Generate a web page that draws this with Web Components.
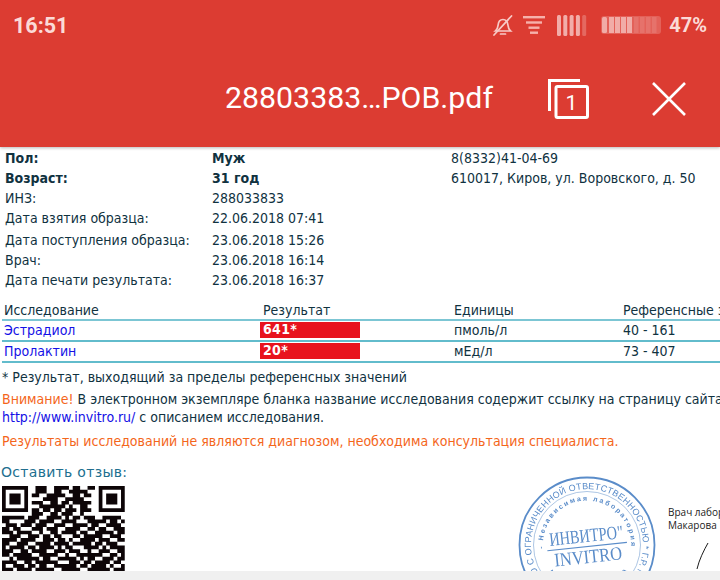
<!DOCTYPE html>
<html lang="ru">
<head>
<meta charset="utf-8">
<title>PDF</title>
<style>
    html, body { margin: 0; padding: 0; width: 720px; height: 580px; overflow: hidden; background: #fff; }
    body { display: flex; flex-direction: column; position: relative; font-family: "DejaVu Sans", sans-serif; }
    .b { font-weight: 700; }
    .wide { margin-top: 2px; }
    a { color: #1410e6; text-decoration: none; }
    .warn { color: #f4661b; }
</style>
</head>
<body>
<app-bar></app-bar>
<report-page>
    <patient-info>
        <info-row class="b"><span slot="label">Пол:</span><span slot="value">Муж</span><span slot="extra" style="font-weight:400">8(8332)41-04-69</span></info-row>
        <info-row class="b"><span slot="label">Возраст:</span><span slot="value">31 год</span><span slot="extra" style="font-weight:400">610017, Киров, ул. Воровского, д. 50</span></info-row>
        <info-row><span slot="label">ИНЗ:</span><span slot="value">288033833</span></info-row>
        <info-row><span slot="label">Дата взятия образца:</span><span slot="value">22.06.2018 07:41</span></info-row>
        <info-row class="wide"><span slot="label">Дата поступления образца:</span><span slot="value">23.06.2018 15:26</span></info-row>
        <info-row><span slot="label">Врач:</span><span slot="value">23.06.2018 16:14</span></info-row>
        <info-row><span slot="label">Дата печати результата:</span><span slot="value">23.06.2018 16:37</span></info-row>
    </patient-info>
    <results-table>
        <result-row head><span slot="name">Исследование</span><span slot="result">Результат</span><span slot="unit">Единицы</span><span slot="ref">Референсные значения</span></result-row>
        <result-row flagged><a slot="name" href="#">Эстрадиол</a><span slot="result">641*</span><span slot="unit">пмоль/л</span><span slot="ref">40 - 161</span></result-row>
        <result-row flagged><a slot="name" href="#">Пролактин</a><span slot="result">20*</span><span slot="unit">мЕд/л</span><span slot="ref">73 - 407</span></result-row>
    </results-table>
    <report-notes>
        <p slot="legend">* Результат, выходящий за пределы референсных значений</p>
        <p slot="attention"><span class="warn">Внимание!</span> В электронном экземпляре бланка название исследования содержит ссылку на страницу сайта<br><a href="#">http://www.invitro.ru/</a> с описанием исследования.</p>
        <p slot="disclaimer" class="warn">Результаты исследований не являются диагнозом, необходима консультация специалиста.</p>
    </report-notes>
    <report-footer></report-footer>
</report-page>
<bottom-strip></bottom-strip>

<script>
class AppBar extends HTMLElement {
    constructor() {
        super();
        this.attachShadow({ mode: 'open' });
        this.shadowRoot.innerHTML = `
            <style>
                :host { display: block; flex: none; height: 147px; background: #dc3c32; box-shadow: 0 1px 3px rgba(0,0,0,.28); position: relative; z-index: 2; font-family: Roboto, sans-serif; color: #fff; }
                .status { display: flex; align-items: center; height: 50px; padding: 0 13px 0 13px; color: #fbdad7; font-weight: 700; font-size: 21.5px; }
                .time { flex: 1; }
                .icons { display: flex; align-items: center; }
                .pct { margin-left: 8px; font-size: 20px; }
                .bar { display: flex; align-items: center; height: 98px; }
                .title { margin-left: 225px; width: 323px; font-size: 30.3px; padding-bottom: 3px; box-sizing: border-box; white-space: nowrap; }
                .count { display: block; }
                .close { display: block; margin-left: 63px; }
                svg { display: block; flex: none; overflow: visible; }
            </style>
            <div class="status">
                <span class="time">16:51</span>
                <div class="icons">
                    <svg width="20" height="21" viewBox="0 0 20 21" fill="none" stroke="#fbdad7" stroke-width="1.700" stroke-linecap="round" opacity=".9">
                        <path d="M2.500 16c1.700-1.400 2.300-3 2.600-5.900.3-3.300 2.100-5.600 4.900-5.600s4.500 2.200 4.900 5.400c.3 3 1.100 4.800 2.600 6.100z"/>
                        <path d="M7.500 19h5"/><path d="M1 20 18.500 1"/>
                    </svg>
                    <svg style="margin-left:10px" width="22" height="18" viewBox="0 0 22 18" fill="#f6b1ab">
                        <rect x="0" y="0" width="22" height="2.400"/><rect x="3" y="5.300" width="16" height="2.400"/><rect x="5.500" y="10.500" width="11" height="2.400"/><rect x="7" y="15.500" width="8" height="2.400"/>
                    </svg>
                    <svg style="margin-left:12px" width="30" height="21" viewBox="0 0 30 21" fill="#fbdad7">
                        <rect x="0" y="0" width="4" height="21" rx="1.500" opacity=".72"/><rect x="6.300" y="0" width="4" height="21" rx="1.500" opacity=".72"/><rect x="12.600" y="0" width="4" height="21" rx="1.500" opacity=".72"/><rect x="18.900" y="0" width="4" height="21" rx="1.500" opacity=".72"/><rect x="25.200" y="0" width="4" height="21" rx="1.500" opacity=".28"/>
                    </svg>
                    <svg style="margin-left:14px" width="60" height="18" viewBox="0 0 60 18">
                        <rect width="60" height="18" rx="3" fill="#fbdad7" opacity=".24"/>
                        <g fill="#fbdad7" opacity=".62"><rect x="1" y="1" width="5" height="16" rx="1.500"/><rect x="8" y="1" width="5" height="16"/><rect x="14" y="1" width="5" height="16"/><rect x="20" y="1" width="5" height="16"/><rect x="26" y="1" width="5" height="16"/></g>
                        <g fill="#fbdad7" opacity=".14"><rect x="33" y="1" width="4.500" height="16"/><rect x="39" y="1" width="4.500" height="16"/><rect x="45" y="1" width="4.500" height="16"/><rect x="51" y="1" width="4.500" height="16"/></g>
                    </svg>
                    <span class="pct">47%</span>
                </div>
            </div>
            <div class="bar">
                <span class="title">28803383…РОВ.pdf</span>
                <svg class="count" width="41" height="40" viewBox="0 0 41 40" fill="none" stroke="#fff">
                    <path d="M1.500 32V1.500H32" stroke-width="3"/>
                    <rect x="8" y="7.500" width="31.500" height="31" rx="1.500" stroke-width="3"/>
                    <text x="23.500" y="31" text-anchor="middle" fill="#fff" stroke="none" font-family="Roboto, sans-serif" font-size="21" font-weight="400">1</text>
                </svg>
                <svg class="close" width="34" height="34" viewBox="0 0 34 34" stroke="#fff" stroke-width="2.600" fill="none">
                    <path d="M1 1 33 33M33 1 1 33"/>
                </svg>
            </div>
        `;
    }
}

class ReportPage extends HTMLElement {
    constructor() {
        super();
        this.attachShadow({ mode: 'open' });
        this.shadowRoot.innerHTML = `
            <style>
                :host { display: block; flex: 1; min-height: 0; overflow: hidden; background: #fff; color: #10323f; font-family: "DejaVu Sans Condensed", "DejaVu Sans", sans-serif; font-stretch: condensed; font-size: 14px; }
            </style>
            <slot></slot>
        `;
    }
}

class PatientInfo extends HTMLElement {
    constructor() {
        super();
        this.attachShadow({ mode: 'open' });
        this.shadowRoot.innerHTML = `
            <style>
                :host { display: block; padding: 1px 0 0 5px; }
            </style>
            <slot></slot>
        `;
    }
}

class InfoRow extends HTMLElement {
    constructor() {
        super();
        this.attachShadow({ mode: 'open' });
        this.shadowRoot.innerHTML = `
            <style>
                :host { display: grid; grid-template-columns: 207px 239px 1fr; height: 20px; line-height: 20px; white-space: nowrap; }
            </style>
            <div><slot name="label"></slot></div>
            <div><slot name="value"></slot></div>
            <div><slot name="extra"></slot></div>
        `;
    }
}

class ResultsTable extends HTMLElement {
    constructor() {
        super();
        this.attachShadow({ mode: 'open' });
        this.shadowRoot.innerHTML = `
            <style>
                :host { display: block; margin-top: 11px; padding-left: 2px; }
            </style>
            <slot></slot>
        `;
    }
}

class ResultRow extends HTMLElement {
    constructor() {
        super();
        this.attachShadow({ mode: 'open' });
        this.shadowRoot.innerHTML = `
            <style>
                :host { display: grid; grid-template-columns: 258px 194px 169px 200px; height: 19px; padding-bottom: 0; border-bottom: 2px solid #62bccc; line-height: 19px; white-space: nowrap; }
                :host([head]) { border-bottom-color: #7cc6d4; height: 18px; line-height: 18px; }
                .name { padding-left: 2px; }
                .result { padding-left: 3px; }
                :host([flagged]) .result { box-sizing: border-box; width: 100px; height: 16px; margin-top: 1px; line-height: 15px; background: #e8131d; color: #fff; font-weight: 700; letter-spacing: .3px; }
            </style>
            <div class="name"><slot name="name"></slot></div>
            <div class="result"><slot name="result"></slot></div>
            <div class="unit"><slot name="unit"></slot></div>
            <div class="ref"><slot name="ref"></slot></div>
        `;
    }
}

class ReportNotes extends HTMLElement {
    constructor() {
        super();
        this.attachShadow({ mode: 'open' });
        this.shadowRoot.innerHTML = `
            <style>
                :host { display: block; padding: 5px 0 0 2px; line-height: 19px; white-space: nowrap; }
                .legend { height: 22px; }
                .attention { height: 42px; line-height: 18px; }
                .disclaimer { height: 20px; }
                ::slotted(p) { margin: 0; }
            </style>
            <div class="legend"><slot name="legend"></slot></div>
            <div class="attention"><slot name="attention"></slot></div>
            <div class="disclaimer"><slot name="disclaimer"></slot></div>
        `;
    }
}

// modules of the qr code, finders are painted over them
const QR_ROWS = [
    '000000000111001111011001100000000',
    '000000000111001100111110000000000',
    '000000001100111110011011000000000',
    '000000000001111001111100000000000',
    '000000001110011011011111000000000',
    '000000000011111110100110000000000',
    '000000001101101101110111000000000',
    '000000001110011011100100000000000',
    '111111011100111101011011100111110',
    '110000111011110011110001111101101',
    '011101110111001110011110110011110',
    '110110001110111001111001101100111',
    '111011110010011011110110011111011',
    '001110011101101100011011111001110',
    '111101111001110110100111101110011',
    '110011100111101111011111011011100',
    '101111011011110101100011110101111',
    '111001101111001110111001001110011',
    '110111110011111001001111111001101',
    '001011111101100111110101100111011',
    '111100110111111000111011011110110',
    '100111011011001111110110111101001',
    '111011110111110011111001111110111'
];

class QrCode extends HTMLElement {
    constructor() {
        super();
        this.attachShadow({ mode: 'open' });
        const m = 3.72;
        let d = '';
        QR_ROWS.forEach((row, y) => {
            [...row].forEach((c, x) => {
                if (c === '1') d += `M${x} ${y}h1v1h-1z`;
            });
        });
        const finder = (x, y) => `<path transform="translate(${x} ${y})" fill-rule="evenodd" d="M0 0h7v7h-7zM1 1v5h5v-5zM2 2h3v3h-3z"/>`;
        this.shadowRoot.innerHTML = `
            <style>
                :host { display: block; width: ${33 * m}px; height: ${23 * m}px; overflow: hidden; }
                svg { display: block; filter: blur(.35px); }
            </style>
            <svg width="${33 * m}" height="${23 * m}" viewBox="0 0 33 23" fill="#0d0507">
                <path d="${d}"/>
                ${finder(0, 0)}${finder(26, 0)}
            </svg>
        `;
    }
}

class LabStamp extends HTMLElement {
    constructor() {
        super();
        this.attachShadow({ mode: 'open' });
        this.shadowRoot.innerHTML = `
            <style>
                :host { display: block; width: 140px; height: 140px; flex: none; margin-top: 12px; }
                svg { display: block; filter: blur(.3px); }
                text { fill: #5a8cc9; font-family: "Liberation Sans", sans-serif; }
                .serif { font-family: "Liberation Serif", serif; }
            </style>
            <svg width="140" height="140" viewBox="0 0 140 140" fill="none" stroke="#5a8cc9">
                <defs>
                    <path id="outer" d="M21.500 98A 56 56 0 1 1 118.500 98"/>
                    <path id="inner" d="M26.200 73.800A 44 44 0 1 1 113.800 73.800"/>
                    <path id="lower" d="M30.700 97.500A 48 48 0 0 0 109.300 97.500"/>
                </defs>
                <circle cx="70" cy="70" r="67.500" stroke-width="1.800"/>
                <circle cx="70" cy="70" r="53.500" stroke-width=".5"/>
                <text stroke="none" font-size="9" letter-spacing=".2"><textPath href="#outer">О С ОГРАНИЧЕННОЙ ОТВЕТСТВЕННОСТЬЮ * Г.Р. № 58</textPath></text>
                <text stroke="none" font-size="7" font-weight="700" letter-spacing="1.900"><textPath href="#inner">- Независимая лаборатория -</textPath></text>
                <g transform="rotate(-6 70 70)" stroke="none">
                    <text class="serif" x="33" y="67" font-size="19" textLength="74" lengthAdjust="spacingAndGlyphs">ИНВИТРО"</text>
                    <rect x="30" y="71" width="80" height="1.100" fill="#5a8cc9"/>
                    <text class="serif" x="36" y="88" font-size="19" textLength="68" lengthAdjust="spacingAndGlyphs">INVITRO</text>
                </g>
                <text stroke="none" font-size="8" font-weight="700" letter-spacing="1"><textPath href="#lower">Independent Laboratory</textPath></text>
            </svg>
        `;
    }
}

class ReportFooter extends HTMLElement {
    constructor() {
        super();
        this.attachShadow({ mode: 'open' });
        this.shadowRoot.innerHTML = `
            <style>
                :host { display: flex; padding: 11px 0 0 1px; }
                .feedback { width: 516px; flex: none; }
                h4 { margin: 0 0 5px; font: 400 14px/18px "DejaVu Sans", sans-serif; letter-spacing: .3px; color: #216f8f; }
                .doctor { margin: 43px 0 0 11px; font: 400 10px/13px "Open Sans", sans-serif; color: #1c1c1c; white-space: nowrap; }
                .sign { display: block; margin: 10px 0 0 28px; }
                qr-code { margin-left: 1px; }
            </style>
            <div class="feedback">
                <h4>Оставить отзыв:</h4>
                <qr-code></qr-code>
            </div>
            <lab-stamp></lab-stamp>
            <div class="doctor">
                Врач лаборант<br>Макарова
                <svg class="sign" width="14" height="28" viewBox="0 0 14 28" fill="none" stroke="#1b1b1b" stroke-width="1">
                    <path d="M12 1C8 8 3 18 1 27"/>
                </svg>
            </div>
        `;
    }
}

class BottomStrip extends HTMLElement {
    constructor() {
        super();
        this.attachShadow({ mode: 'open' });
        this.shadowRoot.innerHTML = `
            <style>
                :host { display: block; position: absolute; left: 0; right: 0; bottom: 0; height: 9px; background: #f0f0f0; z-index: 3; }
            </style>
        `;
    }
}

customElements.define('app-bar', AppBar);
customElements.define('report-page', ReportPage);
customElements.define('patient-info', PatientInfo);
customElements.define('info-row', InfoRow);
customElements.define('results-table', ResultsTable);
customElements.define('result-row', ResultRow);
customElements.define('report-notes', ReportNotes);
customElements.define('qr-code', QrCode);
customElements.define('lab-stamp', LabStamp);
customElements.define('report-footer', ReportFooter);
customElements.define('bottom-strip', BottomStrip);
</script>
</body>
</html>
